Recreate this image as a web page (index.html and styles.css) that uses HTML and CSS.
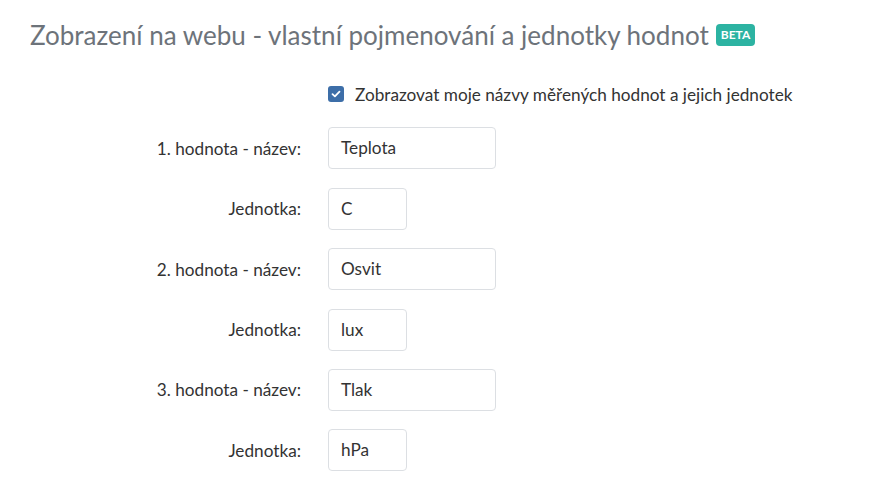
FILE: index.html
```html
<!DOCTYPE html>
<html lang="cs">
<head>
    <meta charset="utf-8">
    <title>Zobrazení na webu</title>
    <link rel="stylesheet" href="styles.css">
</head>
<body>
<div class="panel">
    <h2 class="panel-title">Zobrazení na webu - vlastní pojmenování a jednotky hodnot <span class="badge">BETA</span></h2>

    <form class="form">
        <div class="row">
            <div class="label"></div>
            <label class="check">
                <span class="check-box">
                    <svg width="10" height="8" viewBox="0 0 10 8"><path d="M1.5 4.2 L3.9 6.4 L8.5 1.6" fill="none" stroke="#fff" stroke-width="1.8" stroke-linecap="round" stroke-linejoin="round"/></svg>
                </span>
                Zobrazovat moje názvy měřených hodnot a jejich jednotek
            </label>
        </div>

        <div class="row">
            <label class="label">1. hodnota - název:</label>
            <div class="field wide">Teplota</div>
        </div>
        <div class="row">
            <label class="label">Jednotka:</label>
            <div class="field short">C</div>
        </div>

        <div class="row">
            <label class="label">2. hodnota - název:</label>
            <div class="field wide">Osvit</div>
        </div>
        <div class="row">
            <label class="label">Jednotka:</label>
            <div class="field short">lux</div>
        </div>

        <div class="row">
            <label class="label">3. hodnota - název:</label>
            <div class="field wide">Tlak</div>
        </div>
        <div class="row">
            <label class="label">Jednotka:</label>
            <div class="field short">hPa</div>
        </div>
    </form>
</div>
</body>
</html>
```

FILE: styles.css
```css
html, body {
    margin: 0;
    padding: 0;
    background: #fff;
}

body {
    font-family: Lato, "Noto Sans", sans-serif;
    color: #333;
    font-size: 17px;
}

.panel {
    padding: 16px 0 0 30px;
}

.panel-title {
    margin: 0;
    font-weight: 400;
    font-size: 26px;
    line-height: 38px;
    color: #6d737a;
    display: flex;
    align-items: center;
}

.badge {
    display: inline-block;
    margin-left: 7px;
    padding: 0 5px;
    height: 22px;
    line-height: 22px;
    font-size: 12px;
    font-weight: 700;
    color: #fff;
    background: #2cb3a2;
    border-radius: 4px;
}

.form {
    display: flex;
    flex-direction: column;
    gap: 18.4px;
    margin-top: 24px;
}

.form .row:first-child {
    height: 32px;
    margin-bottom: -1px;
}

.row {
    display: grid;
    grid-template-columns: 271px auto;
    column-gap: 27px;
    align-items: center;
    height: 42px;
}

.label {
    text-align: right;
    font-size: 17.2px;
}

.check {
    display: flex;
    align-items: center;
    gap: 11px;
    font-size: 17.2px;
    color: #333;
}

.check-box {
    display: flex;
    align-items: center;
    justify-content: center;
    width: 16px;
    height: 16px;
    border-radius: 3px;
    background: #3d6ea8;
}

.field {
    box-sizing: border-box;
    height: 42px;
    line-height: 40px;
    padding: 0 12px;
    border: 1px solid #dcdfe3;
    border-radius: 4px;
    background: #fff;
    font-size: 17.2px;
    color: #333;
}

.wide {
    width: 168px;
}

.short {
    width: 79px;
}
```
